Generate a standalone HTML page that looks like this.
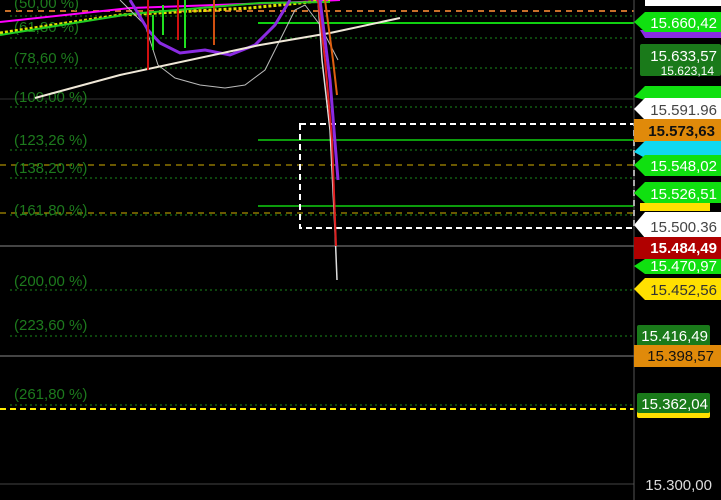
<!DOCTYPE html><html><head><style>
body{margin:0;background:#000;width:721px;height:500px;overflow:hidden;font-family:"Liberation Sans",sans-serif}
svg{position:absolute;left:0;top:0}
</style></head><body>
<svg width="721" height="500" viewBox="0 0 721 500" font-family="Liberation Sans, sans-serif">
<rect width="721" height="500" fill="#000"/>
<g stroke="#1a8a1a" stroke-width="1" stroke-dasharray="2,3">
<line x1="10" y1="16" x2="634" y2="16"/>
<line x1="10" y1="38" x2="634" y2="38"/>
<line x1="10" y1="68" x2="634" y2="68"/>
<line x1="10" y1="107" x2="634" y2="107"/>
<line x1="10" y1="150" x2="634" y2="150"/>
<line x1="10" y1="178" x2="634" y2="178"/>
<line x1="10" y1="215" x2="634" y2="215"/>
<line x1="10" y1="290" x2="634" y2="290"/>
<line x1="10" y1="336" x2="634" y2="336"/>
<line x1="10" y1="405" x2="634" y2="405"/>
</g>
<line x1="0" y1="99" x2="634" y2="99" stroke="#333"/>
<line x1="0" y1="246" x2="634" y2="246" stroke="#888"/>
<line x1="0" y1="356" x2="634" y2="356" stroke="#888"/>
<line x1="0" y1="484" x2="634" y2="484" stroke="#444"/>
<line x1="5" y1="11" x2="634" y2="11" stroke="#c8702a" stroke-width="2" stroke-dasharray="6,5"/>
<line x1="0" y1="165" x2="634" y2="165" stroke="#d4b000" stroke-dasharray="6,5"/>
<line x1="0" y1="213" x2="634" y2="213" stroke="#d4b000" stroke-dasharray="6,5"/>
<line x1="0" y1="409" x2="634" y2="409" stroke="#ffee00" stroke-width="2" stroke-dasharray="6,4"/>
<line x1="258" y1="23" x2="634" y2="23" stroke="#10d010" stroke-width="2"/>
<line x1="258" y1="140" x2="634" y2="140" stroke="#10d010" stroke-width="1.5"/>
<line x1="258" y1="206" x2="634" y2="206" stroke="#10d010" stroke-width="1.5"/>
<rect x="300" y="124" width="334" height="104" fill="none" stroke="#fff" stroke-width="2" stroke-dasharray="6,4"/>
<g fill="#1d7a1d" font-size="15">
<text x="14" y="8">(50,00 %)</text>
<text x="14" y="32">(61,80 %)</text>
<text x="14" y="63">(78,60 %)</text>
<text x="14" y="102">(100,00 %)</text>
<text x="14" y="145">(123,26 %)</text>
<text x="14" y="173">(138,20 %)</text>
<text x="14" y="215">(161,80 %)</text>
<text x="14" y="286">(200,00 %)</text>
<text x="14" y="330">(223,60 %)</text>
<text x="14" y="399">(261,80 %)</text>
</g>
<polyline points="0,22 130,8 300,2 340,0" stroke="#ff00ff" stroke-width="2" fill="none"/>
<polyline points="0,33 120,15 250,8 330,0" stroke="#e0e000" stroke-width="3" stroke-dasharray="3,2" fill="none"/>
<polyline points="0,35 130,14 260,3 330,2" stroke="#22cc22" stroke-width="2" fill="none"/>
<polyline points="120,0 145,25 158,65 175,78 200,85 225,88 245,85 265,70 280,40 295,10 305,5 320,25 338,60" stroke="#bbb" stroke-width="1" fill="none"/>
<polyline points="130,0 148,30 160,43 180,53 205,50 230,55 255,45 275,25 290,0" stroke="#8a2be2" stroke-width="3" fill="none"/>
<polyline points="35,98 120,75 260,45 330,33 400,18" stroke="#f0e8d8" stroke-width="2" fill="none"/>
<g stroke-width="2">
<line x1="148" y1="0" x2="148" y2="70" stroke="#d01010"/>
<line x1="153" y1="15" x2="153" y2="50" stroke="#20e020"/>
<line x1="163" y1="5" x2="163" y2="35" stroke="#20e020"/>
<line x1="178" y1="0" x2="178" y2="40" stroke="#d01010"/>
<line x1="185" y1="0" x2="185" y2="48" stroke="#20e020"/>
<line x1="214" y1="0" x2="214" y2="45" stroke="#d05010"/>
</g>
<polyline points="318,0 322,60 330,130 335,230 337,280" stroke="#ddd" stroke-width="1.5" fill="none"/>
<polyline points="318,0 325,60 332,140 336,246" stroke="#e02020" stroke-width="2" fill="none"/>
<polyline points="320,0 330,80 338,180" stroke="#8a2be2" stroke-width="3" fill="none"/>
<polyline points="325,0 333,60 337,95" stroke="#e06010" stroke-width="2" fill="none"/>
<line x1="634" y1="0" x2="634" y2="500" stroke="#555"/>
<g font-size="15" text-anchor="end">
<rect x="645" y="0" width="76" height="6" fill="#fff"/>
<polygon points="640,30 721,30 721,38 645,38" fill="#8a2be2"/>
<polygon points="634,22 645,12 721,12 721,32 645,32" fill="#10e010"/>
<text x="717" y="28" fill="#fff">15.660,42</text>
<rect x="640" y="44" width="81" height="32" rx="2" fill="#1a7a1a"/>
<text x="717" y="61" fill="#fff">15.633,57</text>
<text x="714" y="75" fill="#fff" font-size="12">15.623,14</text>
<polygon points="634,97 645,86 721,86 721,100 645,100" fill="#10e010"/>
<polygon points="634,109 645,98 721,98 721,120 645,120" fill="#fff"/>
<text x="717" y="115" fill="#444">15.591.96</text>
<rect x="634" y="119" width="87" height="23" fill="#e08a0a"/>
<text x="715" y="136" fill="#111" font-weight="bold">15.573,63</text>
<polygon points="634,152 645,141 721,141 721,158 645,158" fill="#10d8f0"/>
<polygon points="634,165 645,155 721,155 721,176 645,176" fill="#10e010"/>
<text x="717" y="171" fill="#fff">15.548,02</text>
<polygon points="634,193 645,182 721,182 721,203 645,203" fill="#10e010"/>
<text x="717" y="199" fill="#fff">15.526,51</text>
<rect x="640" y="203" width="70" height="8" fill="#ffe000"/>
<polygon points="634,225 645,212 721,212 721,238 645,238" fill="#fff"/>
<text x="717" y="232" fill="#444">15.500.36</text>
<rect x="634" y="237" width="87" height="22" fill="#b00000"/>
<text x="717" y="253" fill="#fff" font-weight="bold">15.484,49</text>
<polygon points="634,266 645,259 721,259 721,274 645,274" fill="#10e010"/>
<text x="717" y="271" fill="#fff">15.470,97</text>
<polygon points="634,289 645,278 721,278 721,300 645,300" fill="#ffe000"/>
<text x="717" y="295" fill="#333">15.452,56</text>
<rect x="637" y="325" width="73" height="22" rx="2" fill="#1a7a1a"/>
<text x="708" y="341" fill="#fff">15.416,49</text>
<rect x="634" y="345" width="87" height="22" fill="#e08a0a"/>
<text x="714" y="361" fill="#111">15.398,57</text>
<rect x="637" y="410" width="73" height="8" rx="2" fill="#ffe000"/>
<rect x="637" y="393" width="73" height="20" rx="2" fill="#1a7a1a"/>
<text x="708" y="409" fill="#fff">15.362,04</text>
<text x="712" y="490" fill="#ddd">15.300,00</text>
</g>
</svg>
</body></html>
